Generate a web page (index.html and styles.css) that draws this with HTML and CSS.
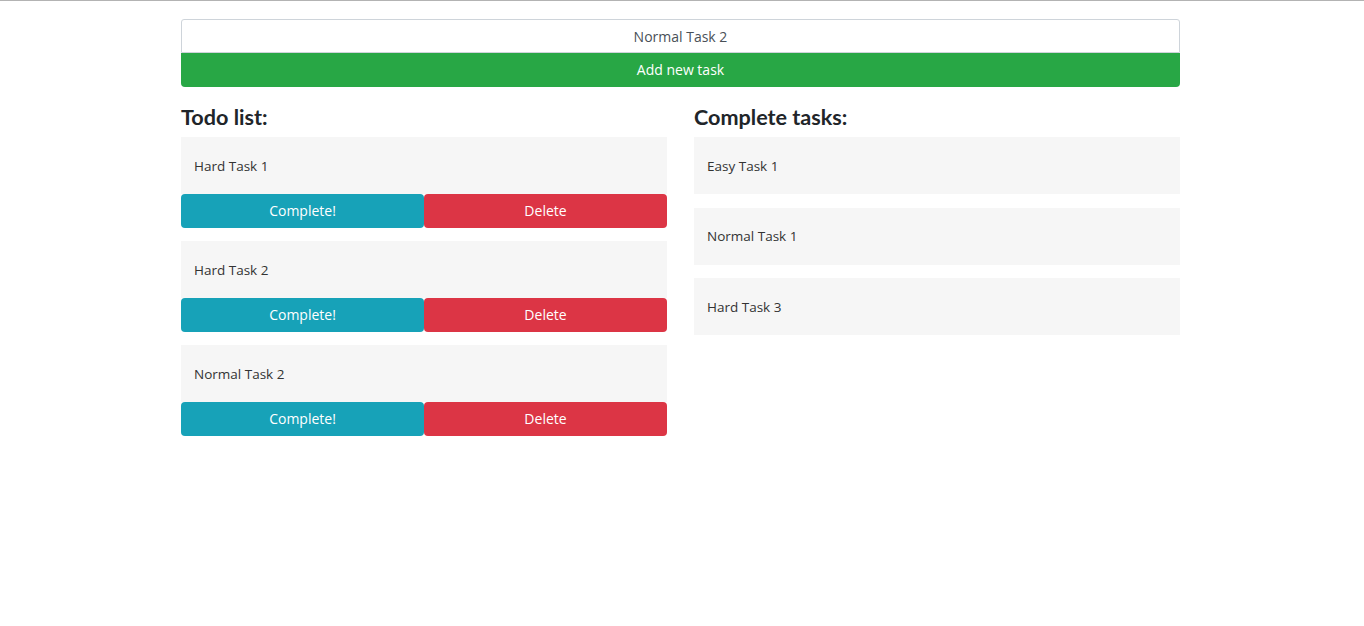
FILE: index.html
```html
<!DOCTYPE html>
<html>
<head>
<meta charset="utf-8">
<link rel="stylesheet" href="styles.css">
</head>
<body>
<div class="container">
  <div class="form">
    <input class="task-input" type="text" value="Normal Task 2">
    <button class="btn btn-add">Add new task</button>
  </div>
  <div class="columns">
    <div class="column">
      <h2 class="title">Todo list:</h2>
      <div class="todo">
        <div class="card">Hard Task 1</div>
        <div class="actions"><button class="btn btn-complete">Complete!</button><button class="btn btn-delete">Delete</button></div>
      </div>
      <div class="todo">
        <div class="card">Hard Task 2</div>
        <div class="actions"><button class="btn btn-complete">Complete!</button><button class="btn btn-delete">Delete</button></div>
      </div>
      <div class="todo">
        <div class="card">Normal Task 2</div>
        <div class="actions"><button class="btn btn-complete">Complete!</button><button class="btn btn-delete">Delete</button></div>
      </div>
    </div>
    <div class="column">
      <h2 class="title">Complete tasks:</h2>
      <div class="done"><div class="card">Easy Task 1</div></div>
      <div class="done"><div class="card">Normal Task 1</div></div>
      <div class="done"><div class="card">Hard Task 3</div></div>
    </div>
  </div>
</div>
</body>
</html>
```
FILE: styles.css
```css
html, body {
  margin: 0;
  padding: 0;
  background: #fff;
}
body {
  border-top: 1px solid #b3b3b3;
  font-family: "Open Sans", "Noto Sans", sans-serif;
  color: #212529;
}
.container {
  width: 999px;
  margin-left: 181px;
  padding-top: 18px;
}
.form {
  display: flex;
  flex-direction: column;
}
.task-input {
  box-sizing: border-box;
  height: 34px;
  width: 100%;
  border: 1px solid #ced4da;
  border-radius: 3px 3px 0 0;
  text-align: center;
  font-family: inherit;
  font-size: 14px;
  color: #495057;
  outline: none;
  padding: 0 12px;
}
.btn {
  box-sizing: border-box;
  height: 34px;
  border: none;
  font-family: inherit;
  font-size: 14px;
  line-height: 32px;
  color: #fff;
  padding: 0 0 1px 0;
  cursor: pointer;
}
.btn-add {
  width: 100%;
  background: #28a745;
  border-radius: 0 0 4px 4px;
}
.columns {
  display: flex;
  gap: 27px;
  margin-top: 16px;
}
.column {
  width: 486px;
}
.title {
  margin: 0 0 5px 0;
  font-family: "Lato", "Open Sans", sans-serif;
  font-size: 21.6px;
  font-weight: 700;
  line-height: 29px;
  color: #212529;
}
.card {
  box-sizing: border-box;
  height: 57px;
  background: #f6f6f6;
  padding: 0 13px;
  display: flex;
  align-items: center;
  font-size: 13.5px;
  color: #333;
}
.todo {
  margin-bottom: 13px;
}
.done {
  margin-bottom: 13.5px;
}
.actions {
  display: flex;
}
.actions .btn {
  flex: 1;
  border-radius: 4px;
}
.btn-complete {
  background: #17a2b8;
}
.btn-delete {
  background: #dc3545;
}
```
